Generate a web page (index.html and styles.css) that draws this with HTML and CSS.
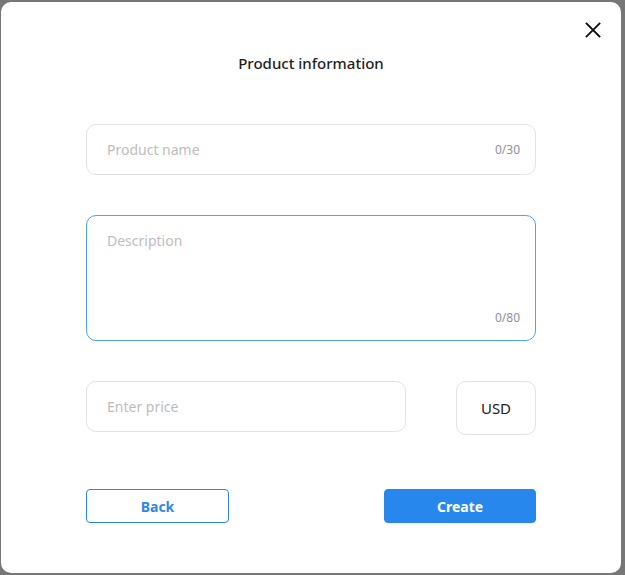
FILE: index.html
```html
<!DOCTYPE html>
<html>
<head>
<meta charset="utf-8">
<link rel="stylesheet" href="styles.css">
</head>
<body>
<div class="modal">
  <button class="close" aria-label="Close">
    <svg width="16" height="16" viewBox="0 0 16 16"><path d="M1.5 1.5 L14.5 14.5 M14.5 1.5 L1.5 14.5" stroke="#111" stroke-width="1.8" stroke-linecap="square" fill="none"/></svg>
  </button>
  <h1 class="title">Product information</h1>
  <div class="form">
    <div class="field field-name">
      <input class="input" type="text" placeholder="Product name">
      <span class="count">0/30</span>
    </div>
    <div class="field field-desc focused">
      <textarea class="textarea" placeholder="Description"></textarea>
      <span class="count count-desc">0/80</span>
    </div>
    <div class="price-row">
      <div class="field field-price">
        <input class="input" type="text" placeholder="Enter price">
      </div>
      <div class="currency">USD</div>
    </div>
    <div class="actions">
      <button class="btn btn-back">Back</button>
      <button class="btn btn-create">Create</button>
    </div>
  </div>
</div>
</body>
</html>
```
FILE: styles.css
```css
html, body {
  margin: 0;
  padding: 0;
}
body {
  background: #777777;
  width: 625px;
  height: 575px;
  padding: 2px 0 0 1px;
  box-sizing: border-box;
  font-family: "Noto Sans", "Open Sans", sans-serif;
  overflow: hidden;
}
.modal {
  position: relative;
  width: 620px;
  height: 571px;
  background: #ffffff;
  border-radius: 10px;
  box-sizing: border-box;
  padding: 51px 85px 0 85px;
}
.close {
  position: absolute;
  top: 20px;
  right: 20px;
  width: 16px;
  height: 16px;
  padding: 0;
  border: 0;
  background: none;
  display: block;
}
.close svg { display: block; }
.title {
  margin: 0;
  font-size: 15px;
  font-weight: 500;
  line-height: 20px;
  color: #1f1f1f;
  text-align: center;
}
.form {
  display: flex;
  flex-direction: column;
  margin-top: 51px;
}
.field {
  display: flex;
  align-items: center;
  border: 1px solid #e2e2e2;
  border-radius: 10px;
  box-sizing: border-box;
  background: #fff;
}
.field-name {
  height: 51px;
  padding: 0 15px 0 20px;
}
.input {
  flex: 1;
  min-width: 0;
  border: 0;
  outline: none;
  padding: 0;
  font-family: inherit;
  font-size: 14px;
  line-height: 20px;
  color: #222;
  background: transparent;
}
.input::placeholder, .textarea::placeholder {
  color: #bdbdbd;
}
.count {
  font-size: 12px;
  color: #8c91a0;
  line-height: 16px;
}
.field-desc {
  margin-top: 40px;
  height: 126px;
  flex-direction: column;
  align-items: stretch;
  padding: 15px 15px 14px 20px;
  border-color: #4ba5f7;
}
.textarea {
  flex: 1;
  border: 0;
  outline: none;
  resize: none;
  padding: 0;
  font-family: inherit;
  font-size: 14px;
  line-height: 20px;
  color: #222;
  background: transparent;
}
.count-desc {
  align-self: flex-end;
}
.price-row {
  margin-top: 40px;
  display: flex;
  justify-content: space-between;
  align-items: flex-start;
}
.field-price {
  width: 320px;
  height: 51px;
  padding: 0 20px;
}
.currency {
  width: 80px;
  height: 54px;
  border: 1px solid #e2e2e2;
  border-radius: 10px;
  box-sizing: border-box;
  display: flex;
  align-items: center;
  justify-content: center;
  font-size: 15px;
  color: #222;
}
.actions {
  margin-top: 54px;
  display: flex;
  justify-content: space-between;
}
.btn {
  height: 34px;
  border-radius: 4px;
  font-family: inherit;
  font-size: 14px;
  font-weight: 700;
  padding: 0;
  box-sizing: border-box;
}
.btn-back {
  width: 143px;
  background: #fff;
  border: 1px solid #2b88ea;
  color: #2b88ea;
}
.btn-create {
  width: 152px;
  background: #2887ec;
  border: 1px solid #2887ec;
  color: #fff;
}
```
